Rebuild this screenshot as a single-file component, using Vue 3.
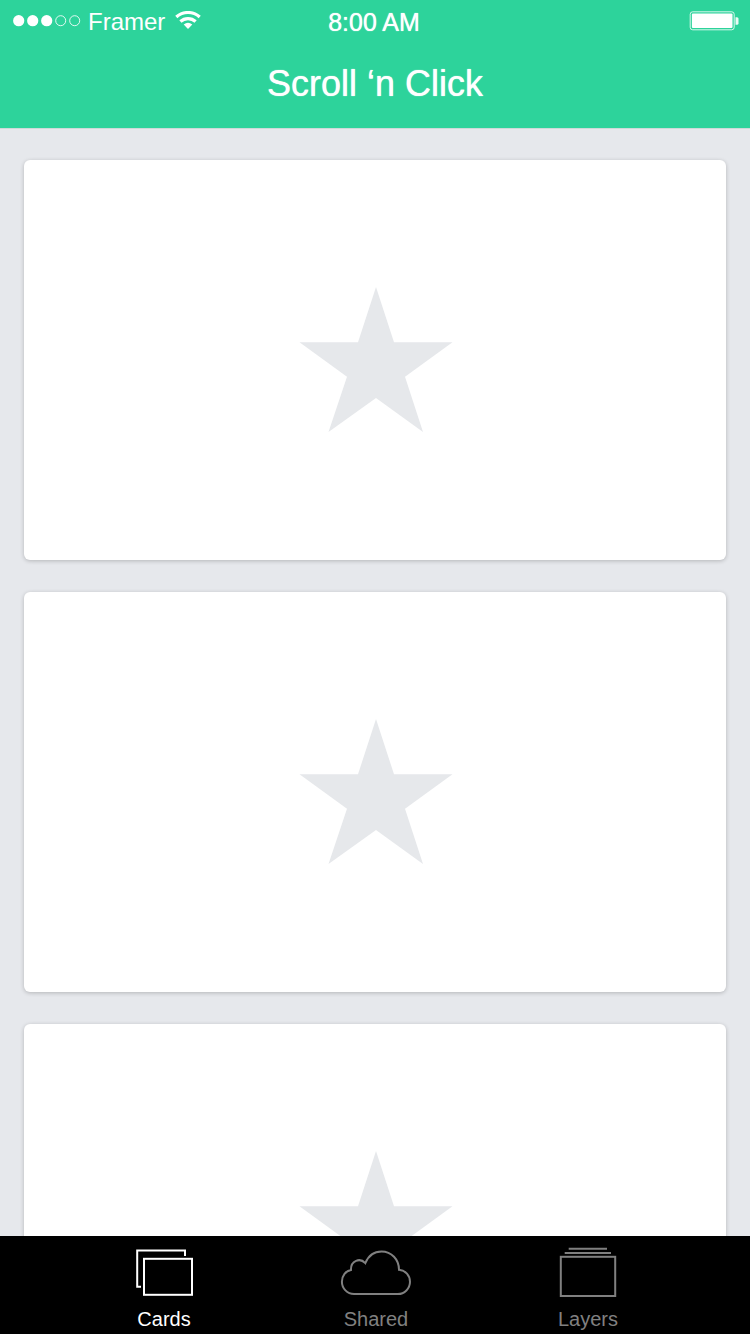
<script setup>
import { ref } from 'vue'

const tabs = ['Cards', 'Shared', 'Layers']
const active = ref('Cards')
const cards = [1, 2, 3]
</script>

<template>
  <div class="screen">
    <header class="header">
      <div class="status">
        <div class="carrier">
          <svg class="signal" width="68" height="12" viewBox="0 0 68 12" aria-hidden="true">
            <g fill="#fff">
              <circle cx="5.7" cy="5.7" r="5.6" />
              <circle cx="19.7" cy="5.7" r="5.6" />
              <circle cx="33.7" cy="5.7" r="5.6" />
            </g>
            <g fill="none" stroke="#fff" stroke-opacity=".85">
              <circle cx="47.7" cy="5.7" r="5" />
              <circle cx="61.7" cy="5.7" r="5" />
            </g>
          </svg>
          <span>Framer</span>
          <svg class="wifi" width="26" height="18" viewBox="0 0 26 18" aria-hidden="true">
            <g fill="none" stroke="#fff" stroke-width="3.2">
              <path d="M1.300 6A17.500 17.500 0 0 1 24.700 6" />
              <path d="M5.400 10.500A11.300 11.300 0 0 1 20.600 10.500" />
            </g>
            <path d="M8.700 13.600Q13 9.800 17.300 13.600L13 18Z" fill="#fff" />
          </svg>
        </div>
        <time class="time">8:00 AM</time>
        <svg class="battery" width="50" height="20" viewBox="0 0 50 20" aria-hidden="true">
          <rect x="1.2" y=".8" width="44" height="18" rx="2.5" fill="none" stroke="#fff" stroke-opacity=".8" />
          <rect x="2.900" y="2.500" width="40.600" height="14.600" rx="1" fill="#fff" />
          <path d="M46.500 6.200H48a1.500 1.500 0 0 1 1.500 1.500v4.600a1.500 1.500 0 0 1-1.500 1.500h-1.500z" fill="#fff" fill-opacity=".9" />
        </svg>
      </div>
      <h1 class="title">Scroll ‘n Click</h1>
    </header>

    <main class="content">
      <article v-for="card in cards" :key="card" class="card">
        <svg width="154" height="146" viewBox="0 0 154 146" aria-hidden="true">
          <path
            d="M77 1L95 56.300H153.500L106 90.800L124 146L77 112L29.500 146L48 90.800L.5 56.300H59Z"
            fill="#e6e8eb"
          />
        </svg>
      </article>
    </main>

    <nav class="tabs">
      <button
        v-for="tab in tabs"
        :key="tab"
        type="button"
        class="tab"
        :class="{ active: tab === active }"
        @click="active = tab"
      >
        <svg
          width="72"
          height="52"
          viewBox="0 0 72 52"
          fill="none"
          stroke="currentColor"
          stroke-width="2"
          aria-hidden="true"
        >
          <template v-if="tab === 'Cards'">
            <path d="M57 10V4.500H9.200V40.800H13" />
            <rect x="16" y="12.800" width="48" height="36" />
          </template>
          <path
            v-else-if="tab === 'Shared'"
            d="M14 48A12.200 12.200 0 0 1 1.900 35.800C1.900 29.500 5.800 24.800 11 24C10.600 14.500 20 11.300 25.300 17.200C28.500 9.500 34.500 5.500 41.500 5.500C51.500 5.500 59 13.500 59 23.800C65.500 24.300 70 29.500 70 35.800A12.200 12.200 0 0 1 57.800 48Z"
          />
          <template v-else>
            <path d="M16.700 2.800H55M12.700 6.900H59" />
            <rect x="8.800" y="10.800" width="54.400" height="39.200" />
          </template>
        </svg>
        <span>{{ tab }}</span>
      </button>
    </nav>
  </div>
</template>

<style>
body {
  margin: 0;
}
</style>

<style scoped>
.screen {
  display: flex;
  flex-direction: column;
  height: 100vh;
  overflow: hidden;
  background: #e6e8ec;
  font-family: "Liberation Sans", Arial, sans-serif;
}

.header {
  position: relative;
  flex: none;
  padding-bottom: 4px;
  background: #2dd39b;
  box-shadow: 0 1px 0 #cddad9;
  color: #fff;
}

.status {
  display: grid;
  grid-template-columns: 1fr auto 1fr;
  padding: 0 11px 0 9px;
  font-size: 24px;
  line-height: 44px;
}

.carrier {
  display: flex;
  align-items: flex-start;
}

.signal {
  margin: 15px 7px 0 4px;
}

.wifi {
  margin: 11px 0 0 10px;
}

.battery {
  justify-self: end;
  margin-top: 11px;
}

.time,
.title {
  text-shadow: 0 0 1px #fff;
}

.time {
  font-size: 25px;
}

.title {
  margin: 0;
  font-size: 36px;
  font-weight: 400;
  line-height: 80px;
  text-align: center;
}

.content {
  display: flex;
  flex: 1;
  flex-direction: column;
  gap: 32px;
  min-height: 0;
  padding: 32px 24px 0;
  overflow: hidden;
}

.card {
  display: flex;
  flex: none;
  align-items: center;
  justify-content: center;
  box-sizing: border-box;
  height: 400px;
  padding: 0 0 2px 2px;
  border-radius: 6px;
  background: #fff;
  box-shadow: 0 1px 4px rgba(0, 0, 0, 0.22);
}

.tabs {
  display: grid;
  flex: none;
  grid-template-columns: repeat(3, 1fr);
  padding: 0 56px 0 58px;
  background: #000;
}

.tab {
  display: flex;
  flex-direction: column;
  align-items: center;
  gap: 9px;
  padding: 10px 0 3px;
  border: 0;
  background: none;
  color: #808080;
  font: inherit;
  font-size: 20px;
  line-height: 24px;
  cursor: pointer;
}

.tab.active {
  color: #fff;
}
</style>
